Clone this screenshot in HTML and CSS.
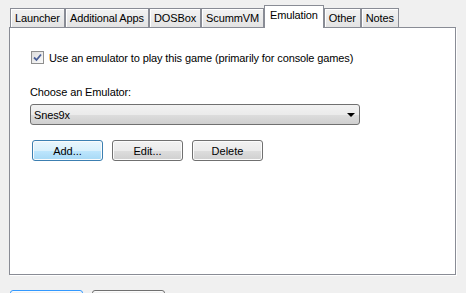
FILE: index.html
```html
<!DOCTYPE html>
<html lang="en">
<head>
    <meta charset="UTF-8">
    <meta name="viewport" content="width=device-width, initial-scale=1.0">
    <title>Emulation</title>
    <link rel="stylesheet" href="styles.css">
</head>
<body>
    <div class="tabs">
        <div class="tab">Launcher</div>
        <div class="tab">Additional Apps</div>
        <div class="tab">DOSBox</div>
        <div class="tab">ScummVM</div>
        <div class="tab active">Emulation</div>
        <div class="tab">Other</div>
        <div class="tab">Notes</div>
    </div>
    <div class="panel">
        <label class="check-row">
            <span class="checkbox">
                <svg width="11" height="11" viewBox="0 0 11 11">
                    <path d="M2 5.5 L4.5 8 L9 2.5" fill="none" stroke="#4a5f97" stroke-width="1.8"/>
                </svg>
            </span>
            Use an emulator to play this game (primarily for console games)
        </label>
        <div class="field-label">Choose an Emulator:</div>
        <div class="select">
            <span>Snes9x</span>
            <span class="arrow"></span>
        </div>
        <div class="buttons">
            <button class="btn hot">Add...</button>
            <button class="btn">Edit...</button>
            <button class="btn">Delete</button>
        </div>
    </div>
    <div class="footer">
        <button class="btn wide focused"></button>
        <button class="btn wide"></button>
    </div>
</body>
</html>
```

FILE: styles.css
```css
html, body {
    height: 293px;
    overflow: hidden;
}
body {
    margin: 0;
    background-color: #f0f0f0;
    font-family: "Liberation Sans", Arial, sans-serif;
    font-size: 11px;
    letter-spacing: -0.12px;
    color: #000000;
}
.tabs {
    display: flex;
    align-items: flex-end;
    padding: 6px 0 0 10px;
    height: 21px;
}
.tab {
    height: 18px;
    line-height: 18px;
    padding: 0 4px;
    border: 1px solid #898c95;
    border-bottom: none;
    background: linear-gradient(#f2f2f2, #e3e3e3);
    box-shadow: inset 1px 1px 0 #ffffff;
}
.tab.active {
    position: relative;
    height: 22px;
    line-height: 18px;
    margin-bottom: -1px;
    background: #ffffff;
    box-shadow: none;
    z-index: 1;
    padding: 0 5px;
}
.panel {
    margin-left: 9px;
    width: 447px;
    height: 248px;
    border: 1px solid #898c95;
    background-color: #ffffff;
    box-shadow: 1px 1px 0 #ffffff;
    padding-left: 20px;
    box-sizing: border-box;
}
.check-row {
    display: flex;
    align-items: center;
    gap: 5px;
    margin: 23px 0 0 1px;
    height: 13px;
}
.checkbox {
    display: flex;
    align-items: center;
    justify-content: center;
    width: 11px;
    height: 11px;
    border: 1px solid #8f8f8f;
    background: linear-gradient(135deg, #dcdcdc, #fbfbfb);
}
.field-label {
    margin-top: 22px;
    line-height: 13px;
}
.select {
    display: flex;
    align-items: center;
    justify-content: space-between;
    margin-top: 5px;
    width: 330px;
    height: 21px;
    padding: 0 4px 0 3px;
    border: 1px solid #707070;
    border-radius: 3px;
    background: linear-gradient(#f2f2f2 0%, #ebebeb 50%, #dddddd 51%, #cfcfcf 100%);
    box-sizing: border-box;
}
.arrow {
    width: 0;
    height: 0;
    border-left: 4px solid transparent;
    border-right: 4px solid transparent;
    border-top: 4px solid #000000;
}
.buttons {
    display: flex;
    gap: 9px;
    margin: 15px 0 0 2px;
}
.btn {
    width: 71px;
    height: 21px;
    padding: 0;
    font-family: "Liberation Sans", Arial, sans-serif;
    font-size: 11px;
    color: #000000;
    border: 1px solid #707070;
    border-radius: 3px;
    background: linear-gradient(#f2f2f2 0%, #ebebeb 50%, #dddddd 51%, #cfcfcf 100%);
    box-shadow: inset 0 0 0 1px #fbfbfb;
}
.btn.hot {
    border-color: #3c7fb1;
    background: linear-gradient(#eaf6fd 0%, #d9f0fc 50%, #bee6fd 51%, #a7d9f5 100%);
}
.footer {
    display: flex;
    gap: 9px;
    margin-top: 15px;
    padding-left: 10px;
}
.btn.wide {
    width: 73px;
}
.btn.focused {
    border-color: #3399ff;
}
```
